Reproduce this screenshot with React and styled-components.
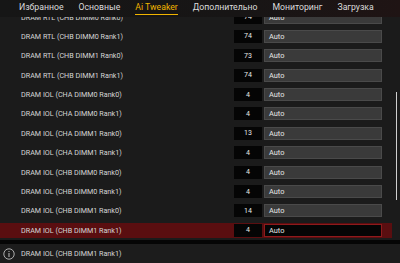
import React from "react";
import styled, { createGlobalStyle } from "styled-components";

const Global = createGlobalStyle`
  html, body { margin: 0; padding: 0; background: #1b1b1b; }
  body { font-family: Roboto, "Open Sans", sans-serif; overflow: hidden; }
  #root { width: 400px; height: 263px; }
`;

const Page = styled.div`
  width: 400px;
  height: 263px;
  display: flex;
  flex-direction: column;
  background: #1b1b1b;
  overflow: hidden;
`;

const Nav = styled.nav`
  height: 17px;
  flex: none;
  display: flex;
  align-items: flex-start;
  gap: 15px;
  padding-left: 19px;
  background: linear-gradient(90deg, #161616 0%, #171515 60%, #1f1414 100%);
  position: relative;
  z-index: 1;
`;

const Tab = styled.div`
  font-size: 8.7px;
  line-height: 13px;
  padding-top: 1px;
  color: ${(p) => (p.$active ? "#f0b400" : "#dcdcdc")};
  border-bottom: ${(p) => (p.$active ? "1.5px solid #f0b400" : "1.5px solid transparent")};
  height: 15px;
  box-sizing: border-box;
  white-space: nowrap;
`;

const Content = styled.div`
  flex: none;
  height: 223px;
  position: relative;
  overflow: hidden;
`;

const List = styled.div`
  display: flex;
  flex-direction: column;
  gap: 4.4px;
  margin-top: -7.5px;
  width: 392px;
`;

const Row = styled.div`
  height: 15px;
  display: flex;
  align-items: center;
  padding-left: 21px;
  padding-right: 10px;
  background: ${(p) => (p.$selected ? "#5a0e10" : "transparent")};
`;

const Label = styled.div`
  flex: 1;
  font-size: 7.2px;
  color: #d6d6d6;
  white-space: nowrap;
`;

const ValueBox = styled.div`
  width: 28px;
  height: 13px;
  background: #050505;
  color: #e8e8e8;
  font-size: 7px;
  display: flex;
  align-items: center;
  justify-content: center;
  margin-right: 2px;
`;

const Field = styled.div`
  width: 118px;
  height: 13px;
  box-sizing: border-box;
  background: ${(p) => (p.$selected ? "#050505" : "#3a3a3a")};
  border: 1px solid ${(p) => (p.$selected ? "#8e1a1c" : "#4a4a4a")};
  color: #e6e6e6;
  font-size: 7.4px;
  display: flex;
  align-items: center;
  padding-left: 4px;
`;

const Scrollbar = styled.div`
  position: absolute;
  right: 3px;
  top: 75px;
  width: 1.5px;
  height: 108px;
  background: #cfcfcf;
`;

const Divider = styled.div`
  height: 4px;
  flex: none;
  background: #050505;
`;

const Info = styled.div`
  flex: 1;
  display: flex;
  align-items: center;
  gap: 6px;
  padding-left: 3px;
  background: #1c1c1c;
`;

const InfoText = styled.div`
  font-size: 7.2px;
  color: #d6d6d6;
  margin-top: -1px;
`;

const rows = [
  ["DRAM RTL (CHB DIMM0 Rank0)", "74"],
  ["DRAM RTL (CHB DIMM0 Rank1)", "74"],
  ["DRAM RTL (CHB DIMM1 Rank0)", "73"],
  ["DRAM RTL (CHB DIMM1 Rank1)", "74"],
  ["DRAM IOL (CHA DIMM0 Rank0)", "4"],
  ["DRAM IOL (CHA DIMM0 Rank1)", "4"],
  ["DRAM IOL (CHA DIMM1 Rank0)", "13"],
  ["DRAM IOL (CHA DIMM1 Rank1)", "4"],
  ["DRAM IOL (CHB DIMM0 Rank0)", "4"],
  ["DRAM IOL (CHB DIMM0 Rank1)", "4"],
  ["DRAM IOL (CHB DIMM1 Rank0)", "14"],
  ["DRAM IOL (CHB DIMM1 Rank1)", "4"],
];

const tabs = ["Избранное", "Основные", "Ai Tweaker", "Дополнительно", "Мониторинг", "Загрузка"];

export default function App() {
  return (
    <Page>
      <Global />
      <Nav>
        {tabs.map((t) => (
          <Tab key={t} $active={t === "Ai Tweaker"}>{t}</Tab>
        ))}
      </Nav>
      <Content>
        <List>
          {rows.map(([label, v], i) => {
            const sel = i === rows.length - 1;
            return (
              <Row key={i} $selected={sel}>
                <Label>{label}</Label>
                <ValueBox>{v}</ValueBox>
                <Field $selected={sel}>Auto</Field>
              </Row>
            );
          })}
        </List>
        <Scrollbar />
      </Content>
      <Divider />
      <Info>
        <svg width="12" height="12" viewBox="0 0 12 12">
          <circle cx="6" cy="6" r="5.2" fill="none" stroke="#bdbdbd" strokeWidth="0.9" />
          <rect x="5.5" y="5" width="1" height="4" fill="#bdbdbd" />
          <rect x="5.5" y="3" width="1" height="1" fill="#bdbdbd" />
        </svg>
        <InfoText>DRAM IOL (CHB DIMM1 Rank1)</InfoText>
      </Info>
    </Page>
  );
}
